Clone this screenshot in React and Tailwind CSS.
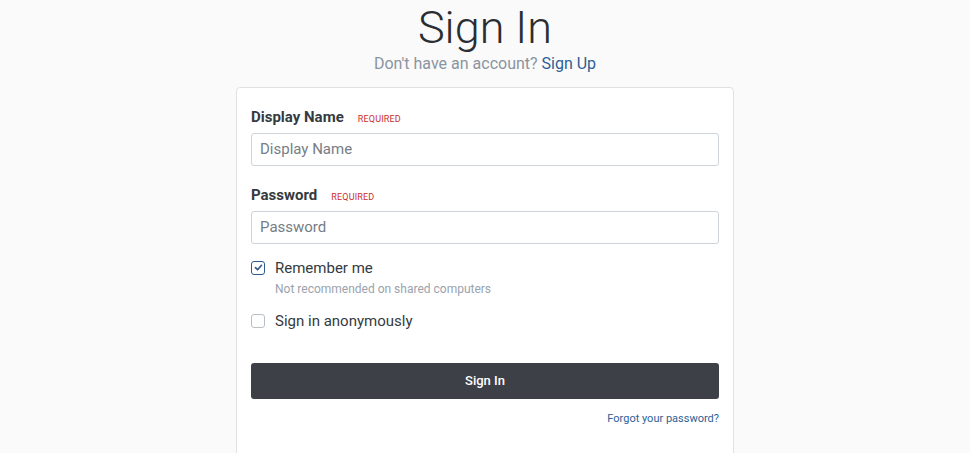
import React, { useState } from 'react';

const font = { fontFamily: 'Roboto, "Liberation Sans", sans-serif' };

const CheckBox = ({ checked, onChange }) => (
  <button
    type="button"
    onClick={onChange}
    className={`w-[14px] h-[14px] mt-[1px] flex-shrink-0 rounded-[3px] border bg-white flex items-center justify-center ${
      checked ? 'border-[#2f5a8f]' : 'border-[#b9bfc6]'
    }`}
  >
    {checked && (
      <svg viewBox="0 0 12 12" className="w-[9px] h-[9px]">
        <path d="M2 6.2 L4.8 9 L10 3" fill="none" stroke="#2f5a8f" strokeWidth="2.2" strokeLinecap="round" strokeLinejoin="round" />
      </svg>
    )}
  </button>
);

const Field = ({ label, type, placeholder }) => (
  <div className="flex flex-col">
    <div className="flex items-baseline gap-[14px] h-[20px]">
      <span className="text-[15px] leading-[20px] font-bold text-[#343a40]">{label}</span>
      <span className="text-[9px] leading-[20px] text-[#c9302c] tracking-[0.02em]">REQUIRED</span>
    </div>
    <input
      type={type}
      placeholder={placeholder}
      className="mt-[6px] h-[33px] w-full px-2 text-[15px] text-[#343a40] bg-white border border-[#ced4da] rounded-[3px] placeholder:text-[#767d85] focus:outline-none"
    />
  </div>
);

export default function App() {
  const [remember, setRemember] = useState(true);
  const [anon, setAnon] = useState(false);

  return (
    <div className="min-h-screen w-full bg-[#fafafa] flex flex-col items-center" style={font}>
      {/* Heading */}
      <h1 className="pt-[3px] text-[45px] leading-[1.1] font-light text-[#2a2d31] font-['Roboto_Light',Roboto,sans-serif]">
        Sign In
      </h1>
      <p className="text-[16px] leading-[22px] text-[#8a949f]">
        Don't have an account? <a href="#" className="text-[#2c5f96]">Sign Up</a>
      </p>

      {/* Card */}
      <div className="mt-[12px] w-[498px] bg-white border border-[#dfe2e5] rounded-[4px] px-[14px] pt-[19px] pb-[30px] flex flex-col">
        <Field label="Display Name" type="text" placeholder="Display Name" />
        <div className="mt-[19px]">
          <Field label="Password" type="password" placeholder="Password" />
        </div>

        <div className="mt-[16px] flex gap-[10px]">
          <CheckBox checked={remember} onChange={() => setRemember(!remember)} />
          <div className="flex flex-col">
            <span className="text-[15px] leading-[16px] text-[#343a40]">Remember me</span>
            <span className="mt-[6px] text-[12px] leading-[14px] text-[#9aa3ad]">Not recommended on shared computers</span>
          </div>
        </div>

        <div className="mt-[17px] flex gap-[10px]">
          <CheckBox checked={anon} onChange={() => setAnon(!anon)} />
          <span className="text-[15px] leading-[16px] text-[#343a40]">Sign in anonymously</span>
        </div>

        <button className="mt-[34px] h-[36px] w-full rounded-[3px] bg-[#3e4048] text-white text-[13px] font-medium">
          Sign In
        </button>

        <div className="mt-[13px] flex justify-end">
          <a href="#" className="text-[11px] leading-[14px] text-[#2c5f96]">Forgot your password?</a>
        </div>
      </div>
    </div>
  );
}
